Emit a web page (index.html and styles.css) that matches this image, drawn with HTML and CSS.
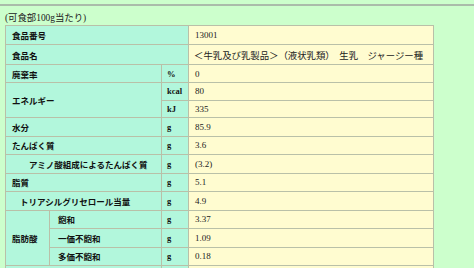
FILE: index.html
```html
<!DOCTYPE html>
<html lang="ja">
<head>
<meta charset="utf-8">
<title>食品成分</title>
<link rel="stylesheet" href="styles.css">
</head>
<body>
<div class="page">
  <div class="rule"></div>
  <div class="caption">(可食部100g当たり)</div>
  <table class="comp">
    <colgroup>
      <col class="c1"><col class="c2"><col class="c3"><col class="c4">
    </colgroup>
    <tr class="h19"><td class="lab" colspan="3">食品番号</td><td class="val">13001</td></tr>
    <tr class="h20"><td class="lab" colspan="3">食品名</td><td class="val jp">＜牛乳及び乳製品＞（液状乳類）　生乳　ジャージー種</td></tr>
    <tr class="h18"><td class="lab" colspan="2">廃棄率</td><td class="unit">%</td><td class="val">0</td></tr>
    <tr class="h17"><td class="lab" colspan="2" rowspan="2">エネルギー</td><td class="unit">kcal</td><td class="val">80</td></tr>
    <tr class="h17"><td class="unit">kJ</td><td class="val">335</td></tr>
    <tr class="hr"><td class="lab" colspan="2">水分</td><td class="unit">g</td><td class="val">85.9</td></tr>
    <tr class="hr"><td class="lab" colspan="2">たんぱく質</td><td class="unit">g</td><td class="val">3.6</td></tr>
    <tr class="hr"><td class="lab ind2" colspan="2">アミノ酸組成によるたんぱく質</td><td class="unit">g</td><td class="val">(3.2)</td></tr>
    <tr class="hr"><td class="lab" colspan="2">脂質</td><td class="unit">g</td><td class="val">5.1</td></tr>
    <tr class="hr"><td class="lab ind1" colspan="2">トリアシルグリセロール当量</td><td class="unit">g</td><td class="val">4.9</td></tr>
    <tr class="hr"><td class="lab" rowspan="3">脂肪酸</td><td class="lab sub">飽和</td><td class="unit">g</td><td class="val">3.37</td></tr>
    <tr class="hr"><td class="lab sub">一価不飽和</td><td class="unit">g</td><td class="val">1.09</td></tr>
    <tr class="hr"><td class="lab sub">多価不飽和</td><td class="unit">g</td><td class="val">0.18</td></tr>
    <tr class="hr"><td class="lab" colspan="2"></td><td class="unit"></td><td class="val"></td></tr>
  </table>
</div>
</body>
</html>
```
FILE: styles.css
```css
html {
  overflow: hidden;
  background: #ccffcc;
}
body {
  margin: 0;
  background: #ccffcc;
  color: #1a1a1a;
  font-family: "Liberation Serif", "Noto Sans CJK JP", serif;
}
.page {
  padding: 4px 0 0 5px;
}
.rule {
  height: 2px;
  background: #aabcaa;
  margin-left: -5px;
}
.caption {
  margin-top: 5px;
  height: 14px;
  line-height: 14px;
  font-size: 9.4px;
  color: #222;
}
.comp {
  border-collapse: collapse;
  table-layout: fixed;
  width: 428px;
}
.c1 { width: 44px; }
.c2 { width: 112px; }
.c3 { width: 27px; }
.c4 { width: 245px; }
.comp td {
  border: 1px solid #b9c0a8;
  padding: 0 0 0 6px;
  vertical-align: middle;
  line-height: 10px;
  white-space: nowrap;
  overflow: hidden;
}
.h19 { height: 19px; }
.h20 { height: 20px; }
.h18 { height: 18px; }
.h17 { height: 17.5px; }
.hr { height: 18.5px; }
.lab {
  background: #b2f7dc;
  font-family: "Noto Sans CJK JP", sans-serif;
  font-weight: bold;
  font-size: 8.5px;
  color: #111;
}
.ind1 { padding-left: 14px !important; }
.ind2 { padding-left: 23px !important; }
.sub { padding-left: 8px !important; }
.unit {
  background: #b2f7dc;
  font-weight: bold;
  font-size: 8.5px;
  padding-left: 5px !important;
  color: #111;
}
.val {
  background: #fffcd0;
  font-size: 9px;
  color: #222;
}
.val.jp {
  font-family: "Noto Sans CJK JP", sans-serif;
  font-size: 9.4px;
  padding-left: 5px;
}
```
